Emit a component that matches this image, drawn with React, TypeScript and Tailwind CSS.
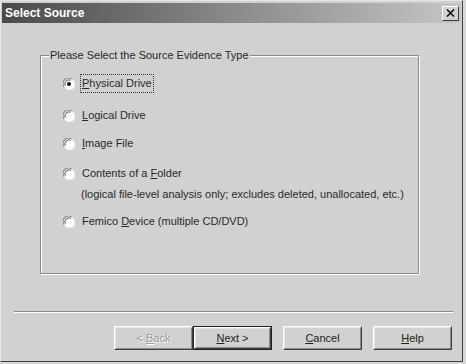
import type { ReactNode } from 'react';

const font = { fontFamily: '"Liberation Sans", Arial, sans-serif' };

function Radio({ checked }: { checked?: boolean }) {
  return (
    <svg width="12" height="12" viewBox="0 0 12 12" className="shrink-0">
      <circle cx="6" cy="6" r="5.5" fill="#ffffff" />
      <path d="M1.1 8.6 A5.4 5.4 0 0 1 8.6 1.1" stroke="#8c8c8c" strokeWidth="1.2" fill="none" />
      <path d="M2.2 7.7 A4.2 4.2 0 0 1 7.7 2.2" stroke="#484848" strokeWidth="1" fill="none" />
      <path d="M10.9 3.4 A5.4 5.4 0 0 1 3.4 10.9" stroke="#f0f0f0" strokeWidth="1.2" fill="none" />
      {checked && <circle cx="6" cy="6" r="2" fill="#111" />}
    </svg>
  );
}

function Option({ children, checked, focused, className }: { children: ReactNode; checked?: boolean; focused?: boolean; className?: string }) {
  return (
    <div className={`flex items-center gap-[6px] ${className ?? ''}`}>
      <Radio checked={checked} />
      <span className={`px-[1px] leading-[17px] ${focused ? 'outline outline-1 outline-dotted outline-[#333]' : 'outline outline-1 outline-transparent'}`}>
        {children}
      </span>
    </div>
  );
}

function Btn({ children, isDefault, disabled }: { children: ReactNode; isDefault?: boolean; disabled?: boolean }) {
  return (
    <div className={`w-[79px] h-[24px] ${isDefault ? 'border border-[#222]' : ''}`}>
      <div className="w-full h-full border border-t-white border-l-white border-r-[#404040] border-b-[#404040]">
        <div className="w-full h-full flex items-center justify-center border border-t-[#e4e4e4] border-l-[#e4e4e4] border-r-[#8a8a8a] border-b-[#8a8a8a]">
          <span className={disabled ? 'text-[#9a9a9a] [text-shadow:1px_1px_0_#fff]' : 'text-[#222]'}>{children}</span>
        </div>
      </div>
    </div>
  );
}

export default function App() {
  return (
    <div className="w-[466px] h-[364px] bg-[#d8d8d8] text-[11px] text-[#2a2a2a]" style={font}>
      <div className="w-[463px] h-[362px] flex flex-col bg-[#d1d1d1] border border-t-[#e6e6e6] border-l-[#e6e6e6] border-r-[#404040] border-b-[#404040] pt-[2px] px-[1px]">
        {/* title bar */}
        <div className="h-[20px] flex items-center justify-between pl-[3px] pr-[2px] bg-gradient-to-r from-[#4a4a4a] via-[#8a8a8a] to-[#c6c6c6]">
          <span className="text-white font-bold text-[12px]">Select Source</span>
          <div className="w-[17px] h-[15px] flex items-center justify-center bg-[#d1d1d1] border border-t-white border-l-white border-r-[#404040] border-b-[#404040]">
            <svg width="9" height="8" viewBox="0 0 9 8">
              <path d="M1 0.5 L8 7.5 M8 0.5 L1 7.5" stroke="#111" strokeWidth="1.6" />
            </svg>
          </div>
        </div>

        {/* group box */}
        <fieldset className="mt-[26px] ml-[38px] w-[379px] h-[225px] border border-[#8a8a8a] shadow-[inset_1px_1px_0_#fff,1px_1px_0_#fff] pl-[8px]">
          <legend className="px-[1px] bg-[#d1d1d1] leading-[13px]">Please Select the Source Evidence Type</legend>
          <div className="pl-[14px]">
            <Option checked focused className="mt-[13px]">
              <u>P</u>hysical Drive
            </Option>
            <Option className="mt-[15px]">
              <u>L</u>ogical Drive
            </Option>
            <Option className="mt-[11px]">
              <u>I</u>mage File
            </Option>
            <Option className="mt-[13px]">
              Contents of a <u>F</u>older
            </Option>
            <div className="ml-[18px] mt-[4px] leading-[17px]">(logical file-level analysis only; excludes deleted, unallocated, etc.)</div>
            <Option className="mt-[10px]">
              Femico <u>D</u>evice (multiple CD/DVD)
            </Option>
          </div>
        </fieldset>

        {/* separator */}
        <div className="mt-[37px] ml-[12px] w-[439px] h-[2px] border-t border-t-[#8a8a8a] border-b border-b-white" />

        {/* buttons */}
        <div className="mt-[13px] flex justify-end pr-[9px]">
          <Btn disabled>
            &lt; <u>B</u>ack
          </Btn>
          <Btn isDefault>
            <u>N</u>ext &gt;
          </Btn>
          <div className="w-[11px]" />
          <Btn>
            <u>C</u>ancel
          </Btn>
          <div className="w-[11px]" />
          <Btn>
            <u>H</u>elp
          </Btn>
        </div>
      </div>
    </div>
  );
}
